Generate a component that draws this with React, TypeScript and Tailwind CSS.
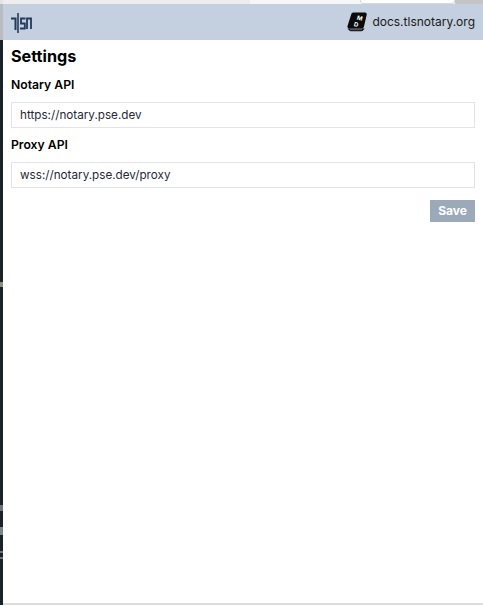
import React from "react";

const Logo = () => (
  <svg width="21" height="21" viewBox="0 0 21 21" fill="none" stroke="#223a5c" strokeWidth="1.500">
    <path d="M0 6.500H4.500V18" strokeWidth="2" />
    <path d="M7 1V21" strokeWidth="1.600" />
    <path d="M14.500 6.500H10V11.500H13.800V16.500H9" strokeWidth="1.800" />
    <path d="M16 17V6.500H20V17" strokeWidth="1.800" />
  </svg>
);

const BookIcon = () => (
  <svg width="20" height="20" viewBox="0 0 20 20">
    <path d="M4.500 1.500C5 0.800 5.700 0.500 6.500 0.500H18C19.300 0.500 20 1.500 19.700 2.800L17 14.500C16.700 15.800 15.800 16.500 14.500 16.500H2.500C1 16.500 0.200 15.500 0.500 14.100Z" fill="#0b0b0b" />
    <path d="M1 16.500C2 18.300 3 18.800 4.500 18.800H14C15.500 18.800 16.500 18 17 16.500" fill="#0b0b0b" stroke="#0b0b0b" strokeWidth="0.800" />
    <path d="M3 17.300H15" stroke="#9aa5b3" strokeWidth="0.600" />
    <text x="9.500" y="7.500" fontSize="6" fontWeight="700" fill="#ffffff" fontFamily="Inter, sans-serif" transform="rotate(15 9.500 7.500)">M</text>
    <text x="6.500" y="14" fontSize="6" fontWeight="700" fill="#ffffff" fontFamily="Inter, sans-serif" transform="rotate(15 6.500 14)">D</text>
  </svg>
);

const Field = ({ label, value }: { label: string; value: string }) => (
  <div className="flex flex-col">
    <label className="mb-[8px] text-[12.200px] leading-[18px] font-semibold text-black">{label}</label>
    <input
      readOnly
      value={value}
      className="h-[26px] w-full border border-[#e2e3e8] bg-white pr-2 pl-2 text-[11.700px] text-[#1f2937] outline-none"
    />
  </div>
);

export default function App() {
  return (
    <div className="flex h-[605px] w-[483px] overflow-hidden bg-white font-['Inter',sans-serif]">
      <div className="flex w-[3px] flex-col">
        <div className="h-[4px] bg-[#e4e4e4]" />
        <div className="h-[36px] bg-[#b9bdc2]" />
        <div className="h-[242px] bg-[#1a2328]" />
        <div className="h-[5px] bg-[#8d8c7e]" />
        <div className="h-[218px] bg-[#1a2328]" />
        <div className="h-[6px] bg-[#6d7376]" />
        <div className="h-[16px] bg-[#1a2328]" />
        <div className="h-[8px] bg-[#7e8386]" />
        <div className="h-[16px] bg-[#1a2328]" />
        <div className="h-[2px] bg-[#6d7376]" />
        <div className="h-[4px] bg-[#1a2328]" />
        <div className="h-[2px] bg-[#6d7376]" />
        <div className="flex-1 bg-[#1a2328]" />
      </div>
      <div className="flex min-w-0 flex-1 flex-col">
        <div className="flex h-[4px]">
          <div className="w-[247px] bg-[#ededed]" />
          <div className="w-[110px] bg-[#f6f6f6]" />
          <div className="w-[95px] rounded-b-[3px] border-x border-b border-[#d9d9d9] bg-white" />
          <div className="flex-1 bg-[#c4c4c4]" />
        </div>
        <header className="flex h-[36px] items-center justify-between bg-[#c4d0df] pr-[8px] pl-[8px]">
          <Logo />
          <div className="flex items-center gap-[5px]">
            <BookIcon />
            <span className="text-[12px] text-[#1a1a1a]">docs.tlsnotary.org</span>
          </div>
        </header>
        <main className="flex flex-1 flex-col px-[8px]">
          <h1 className="mt-[5px] mb-[9px] text-[16.200px] leading-[22px] font-bold text-black">Settings</h1>
          <div className="flex flex-col gap-[8px]">
            <Field label="Notary API" value="https://notary.pse.dev" />
            <Field label="Proxy API" value="wss://notary.pse.dev/proxy" />
          </div>
          <div className="mt-[12px] flex justify-end">
            <button className="h-[22px] w-[45px] bg-[#9ba9b8] text-[12px] font-bold text-white">Save</button>
          </div>
        </main>
        <div className="h-[2px] bg-[#dcdcdc]" />
      </div>
    </div>
  );
}
